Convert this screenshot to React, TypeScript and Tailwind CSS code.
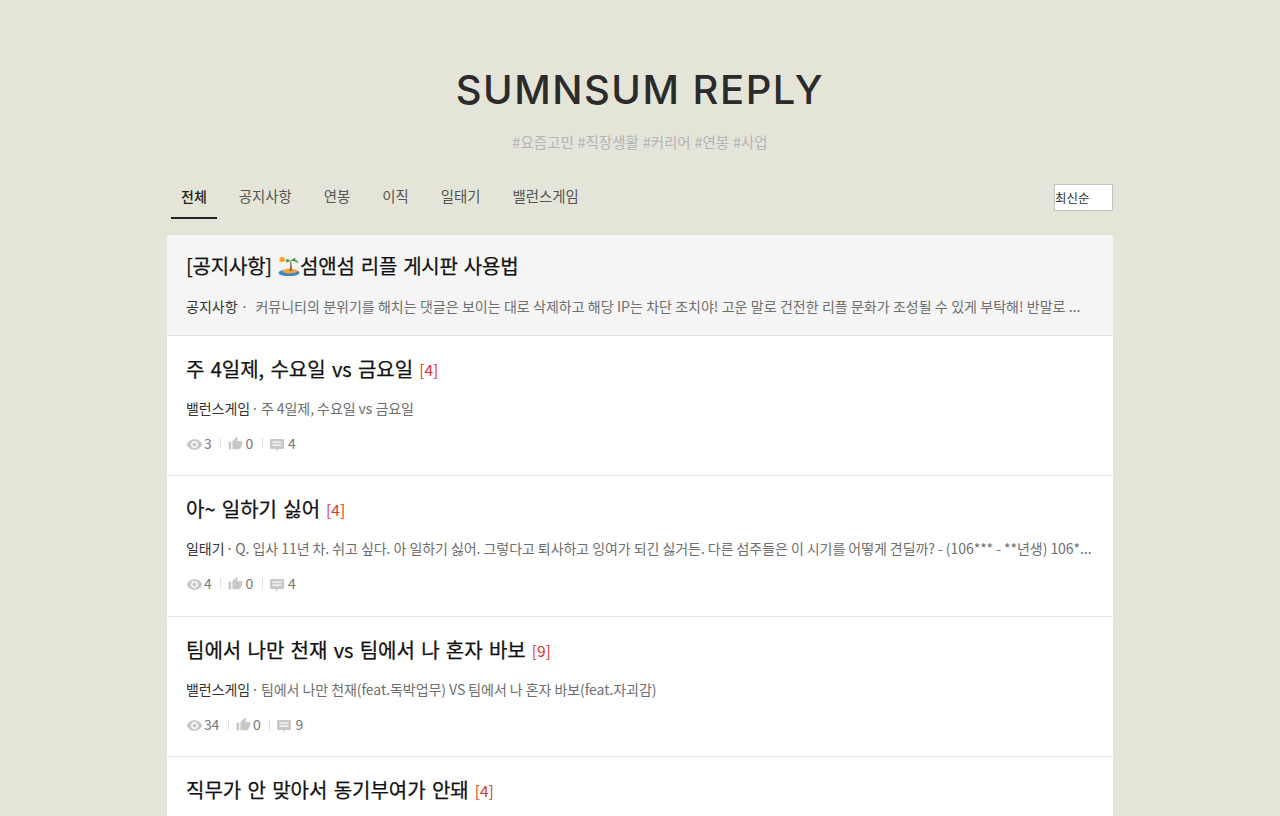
const cjk = "font-['Noto_Sans_CJK_KR','Noto_Sans',sans-serif]";
const titleCls = "flex items-center text-[20px] leading-[34px] font-normal [word-spacing:1.8px] [-webkit-text-stroke:0.25px_#111] text-[#111]";

function EyeIcon() {
  return (
    <svg viewBox="0 0 24 24" className="mt-[2px] h-[17px] w-[17px] fill-[#c8c8c8]">
      <path d="M12 4.500C7 4.500 2.730 7.610 1 12c1.730 4.390 6 7.500 11 7.500s9.270-3.110 11-7.500c-1.730-4.390-6-7.500-11-7.500zM12 17c-2.760 0-5-2.240-5-5s2.240-5 5-5 5 2.240 5 5-2.240 5-5 5zm0-8c-1.660 0-3 1.340-3 3s1.340 3 3 3 3-1.340 3-3-1.340-3-3-3z" />
    </svg>
  );
}

function ThumbIcon() {
  return (
    <svg viewBox="0 0 24 24" className="mt-[1px] h-[15px] w-[15px] fill-[#c8c8c8]">
      <path d="M1 21h4V9H1v12zm22-11c0-1.100-.9-2-2-2h-6.310l.95-4.570.03-.32c0-.41-.17-.79-.44-1.060L14.170 1 7.590 7.590C7.220 7.950 7 8.450 7 9v10c0 1.100.9 2 2 2h9c.83 0 1.540-.5 1.840-1.220l3.020-7.050c.09-.23.14-.47.14-.73v-2z" />
    </svg>
  );
}

function CommentIcon() {
  return (
    <svg viewBox="1 0 16 16" className="mt-[3px] h-[16px] w-[16px] fill-[#c8c8c8]">
      <path fillRule="evenodd" d="M2 2h12a1 1 0 0 1 1 1v8a1 1 0 0 1-1 1H9l-2 3v-3H2a1 1 0 0 1-1-1V3a1 1 0 0 1 1-1zm1.500 2.500v1.200h9V4.500zm0 3v1.200h9V7.500z" />
    </svg>
  );
}

function IslandIcon() {
  return (
    <svg viewBox="0 0 24 24" className="h-[22px] w-[22px] shrink-0">
      <circle cx="4.500" cy="5" r="3" fill="#f9a825" />
      <ellipse cx="12" cy="19.500" rx="11.500" ry="3.500" fill="#3b88c3" />
      <ellipse cx="13" cy="17.500" rx="8" ry="2.800" fill="#f4a53c" />
      <path d="M13 7c.8 3.500.6 7-.6 10.500h2.400C15.400 14 15 10.500 14.200 7z" fill="#8a5a2b" />
      <path d="M14 7C12 4 9.500 4 7.500 6c2 0 2 .5 1.500 3 1.500-1.500 3-2.500 5-2zM14 7c1-3 3-4.500 6-3-1.500.5-1.500 1-1 1.500 2 0 3 1.500 3 4-2-2.500-5-3.500-8-2.500z" fill="#3e9b3e" />
    </svg>
  );
}

const tabs = ["전체", "공지사항", "연봉", "이직", "일태기", "밸런스게임"];

const posts = [
  { title: "주 4일제, 수요일 vs 금요일", count: 4, cat: "밸런스게임", text: "주 4일제, 수요일 vs 금요일", views: 3, likes: 0, h: "h-[140px]" },
  { title: "아~ 일하기 싫어", count: 4, cat: "일태기", text: "Q. 입사 11년 차. 쉬고 싶다. 아 일하기 싫어. 그렇다고 퇴사하고 잉여가 되긴 싫거든. 다른 섬주들은 이 시기를 어떻게 견딜까? - (106*** - **년생) 106*...", views: 4, likes: 0, h: "h-[141px]" },
  { title: "팀에서 나만 천재 vs 팀에서 나 혼자 바보", count: 9, cat: "밸런스게임", text: "팀에서 나만 천재(feat.독박업무) VS 팀에서 나 혼자 바보(feat.자괴감)", views: 34, likes: 0, h: "h-[140px]" },
  { title: "직무가 안 맞아서 동기부여가 안돼", count: 4, cat: "", text: "", views: 0, likes: 0, h: "h-[140px]" },
];

function Sep() {
  return <span className="mr-[7px] ml-[9px] mt-[1px] h-[11px] w-px bg-[#e0e0e0]" />;
}

function Post({ p }: { p: (typeof posts)[number] }) {
  return (
    <div className={`${p.h} border-b border-[#e5e5e5] bg-white px-[19px] pt-[16px]`}>
      <div className={titleCls}>
        <span>{p.title}</span>
        <span className="ml-[6px] text-[15.500px] font-normal [-webkit-text-stroke:0px] text-[#d9352c]">[{p.count}]</span>
      </div>
      {p.cat && (
        <>
          <div className="mt-[10px] whitespace-nowrap text-[14px] leading-[24px] font-normal tracking-[-0.06px] text-[#6e6e6e]">
            <span className="text-[#333]">{p.cat}</span>
            <span className="mx-[1px]">·</span>
            <span className="ml-[1px]">{p.text}</span>
          </div>
          <div className="mt-[12px] flex h-[22px] items-center text-[14px] font-normal tracking-[-0.3px] text-[#777]">
            <EyeIcon />
            <span className="ml-[1px]">{p.views}</span>
            <Sep />
            <ThumbIcon />
            <span className="ml-[2px]">{p.likes}</span>
            <Sep />
            <CommentIcon />
            <span className="ml-[2px]">{p.count}</span>
          </div>
        </>
      )}
    </div>
  );
}

export default function App() {
  return (
    <div className={`${cjk} h-[816px] overflow-hidden bg-[#e4e5d8]`}>
      <div className="mx-auto w-[946px]">
        <header className="pt-[63px] text-center">
          <h1 className="font-['Inter',sans-serif] text-[40px] leading-[54px] font-medium tracking-[1.5px] text-[#2b2b2b]">SUMNSUM REPLY</h1>
          <p className="mt-[14px] text-[14.500px] leading-[22px] font-normal [word-spacing:0.5px] text-[#b4b4b4]">#요즘고민 #직장생활 #커리어 #연봉 #사업</p>
        </header>
        <nav className="mt-[28px] flex h-[54px] items-start justify-between">
          <div className="ml-[4px] flex">
            {tabs.map((t, i) => (
              <div
                key={t}
                className={
                  i === 0
                    ? "mr-[12px] h-[38px] border-b-[2px] border-[#222] px-[10px] text-[14px] leading-[30px] font-medium text-[#222]"
                    : "mr-[12px] h-[38px] px-[10px] text-[14.400px] leading-[30px] font-normal text-[#555]"
                }
              >
                {t}
              </div>
            ))}
          </div>
          <div className="mt-[3px] h-[27px] w-[59px] border border-[#c4c4c4] bg-white text-[12.500px] leading-[25px] text-[#333]">최신순</div>
        </nav>
        <main className="overflow-hidden rounded-t-[2px]">
          <div className="h-[101px] border-b border-[#e0e0e0] bg-[#f5f5f5] px-[19px] pt-[14px]">
            <div className={`${titleCls} tracking-[-0.2px]`}>
              <span>[공지사항]&nbsp;</span>
              <IslandIcon />
              <span>섬앤섬 리플 게시판 사용법</span>
            </div>
            <div className="mt-[11px] whitespace-nowrap text-[14px] leading-[24px] font-normal [word-spacing:0.2px] text-[#6e6e6e]">
              <span className="text-[#333]">공지사항</span>
              <span className="ml-[3px] mr-[7px]">·</span>
              커뮤니티의 분위기를 해치는 댓글은 보이는 대로 삭제하고 해당 IP는 차단 조치야! 고운 말로 건전한 리플 문화가 조성될 수 있게 부탁해! 반말로 ...
            </div>
          </div>
          {posts.map((p) => (
            <Post key={p.title} p={p} />
          ))}
        </main>
      </div>
    </div>
  );
}
